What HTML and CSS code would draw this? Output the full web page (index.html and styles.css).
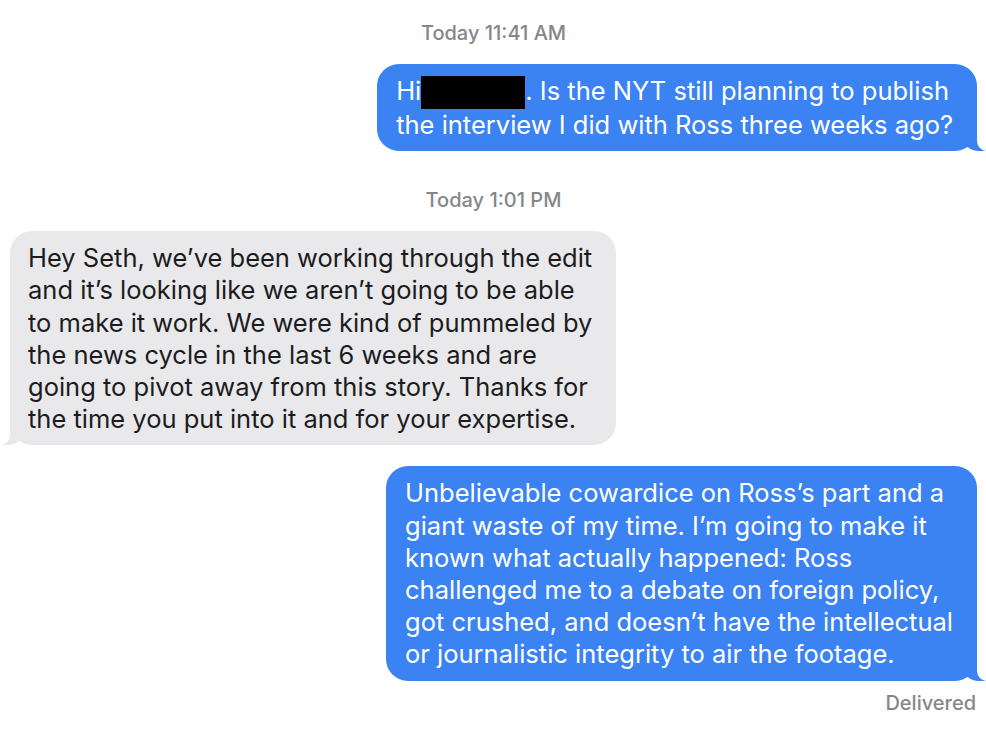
FILE: index.html
```html
<!DOCTYPE html>
<html>
<head>
    <title>Messages</title>
    <link rel="stylesheet" href="styles.css">
</head>
<body>
    <div class="thread">
        <div class="stamp first">Today 11:41 AM</div>

        <div class="bubble sent short">
            Hi<span class="redact"></span>. Is the NYT still planning to publish<br>
            the interview I did with Ross three weeks ago?
        </div>

        <div class="stamp">Today 1:01 PM</div>

        <div class="bubble received">
            Hey Seth, we’ve been working through the edit<br>
            and it’s looking like we aren’t going to be able<br>
            to make it work. We were kind of pummeled by<br>
            the news cycle in the last 6 weeks and are<br>
            going to pivot away from this story. Thanks for<br>
            the time you put into it and for your expertise.
        </div>

        <div class="bubble sent">
            Unbelievable cowardice on Ross’s part and a<br>
            giant waste of my time. I’m going to make it<br>
            known what actually happened: Ross<br>
            challenged me to a debate on foreign policy,<br>
            got crushed, and doesn’t have the intellectual<br>
            or journalistic integrity to air the footage.
        </div>

        <div class="status">Delivered</div>
    </div>
</body>
</html>
```

FILE: styles.css
```css
/* message thread */
body {
    margin: 0;
    padding: 0;
    background: #fff;
    font-family: Inter, "Liberation Sans", sans-serif;
}

.thread {
    display: flex;
    flex-direction: column;
    padding: 0 9px 0 10px;
}

.stamp {
    align-self: center;
    margin-top: 39px;
    font-size: 20px;
    font-weight: 500;
    line-height: 20px;
    color: #86868a;
}

.stamp.first {
    margin-top: 23px;
}

.bubble {
    position: relative;
    width: fit-content;
    font-size: 25.5px;
    line-height: 32.2px;
    padding: 11px 24px 10px 19px;
    border-radius: 22px;
    margin-top: 21px;
}

.sent {
    align-self: flex-end;
    background: #3b82f3;
    color: #fff;
}

.received {
    align-self: flex-start;
    background: #e9e9eb;
    color: #1c1c1e;
    padding-left: 18px;
}

/* tails */
.bubble::before,
.bubble::after {
    content: "";
    position: absolute;
    bottom: 0;
    height: 22px;
}

.sent::before {
    right: -8px;
    width: 22px;
    background: #3b82f3;
    border-bottom-left-radius: 16px 14px;
}

.sent::after {
    right: -12px;
    width: 12px;
    background: #fff;
    border-bottom-left-radius: 10px;
}

.received::before {
    left: -8px;
    width: 22px;
    background: #e9e9eb;
    border-bottom-right-radius: 16px 14px;
}

.received::after {
    left: -12px;
    width: 12px;
    background: #fff;
    border-bottom-right-radius: 10px;
}

.redact {
    display: inline-block;
    width: 104px;
    height: 33px;
    background: #000;
    vertical-align: -9px;
}

.status {
    align-self: flex-end;
    margin-top: 12px;
    margin-right: 1px;
    font-size: 20px;
    font-weight: 500;
    line-height: 20px;
    color: #86868a;
}
```
